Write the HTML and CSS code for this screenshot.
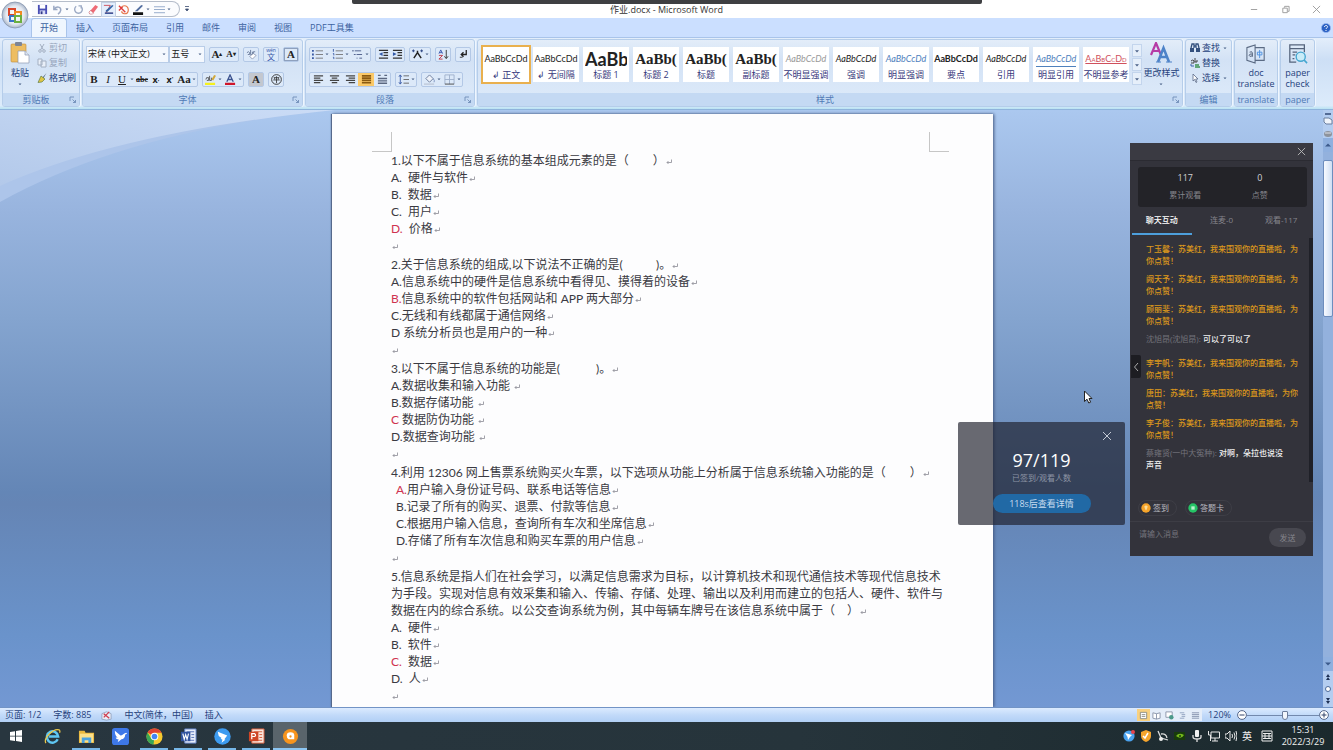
FILE: index.html
```html
<!DOCTYPE html>
<html lang="zh-CN">
<head>
<meta charset="utf-8">
<title>作业.docx - Microsoft Word</title>
<link rel="stylesheet" href="styles.css">
</head>
<body>
<svg class="defs" aria-hidden="true">
  <symbol id="ret" viewBox="0 0 6 6"><path d="M5.500 .500v3H1M2.500 2L1 3.500 2.500 5" fill="none" stroke="#8a8a94" stroke-width=".8"/></symbol>
  <symbol id="caret" viewBox="0 0 6 6"><path d="M1.500 2.500h3L3 4.200z" fill="#4a6187"/></symbol>
  <symbol id="launch" viewBox="0 0 8 8"><path d="M1 5V1h4M3.500 3.500L6.500 6.500M6.500 4v2.500H4" fill="none" stroke="#6f8db8" stroke-width=".9"/></symbol>
  <symbol id="close" viewBox="0 0 10 10"><path d="M1 1l8 8M9 1L1 9" fill="none" stroke="currentColor"/></symbol>
</svg>
<div class="app">
  <header class="titlebar">
    <div class="notch"></div>
    <div class="qat">
      <button aria-label="保存"><svg viewBox="0 0 12 12"><path d="M1 1h10v10H1z" fill="#4a4fb5"/><path d="M3 1h6v4H3z" fill="#fff"/><path d="M3 7h6v4H3z" fill="#d6daf5"/><path d="M4 8h2v3H4z" fill="#333a8a"/></svg></button>
      <button aria-label="撤销"><svg viewBox="0 0 12 12"><path d="M2 2v4h4M2.500 5.500C5 2 10 3 9.500 7 9.300 9 8 10 6.500 11" fill="none" stroke="#9ba9c4" stroke-width="1.600"/></svg></button>
      <svg class="car"><use href="#caret"/></svg>
      <button aria-label="恢复"><svg viewBox="0 0 12 12"><path d="M3.500 2.500a4.200 4.200 0 1 0 5 0M9 5V2H6" fill="none" stroke="#9ba9c4" stroke-width="1.500"/></svg></button>
      <button aria-label="橡皮擦"><svg viewBox="0 0 12 12"><path d="M1 9l7-8 3 2-6 8H2z" fill="#ee6b76"/><path d="M1 9l2-2 3 3-1 1H2z" fill="#fff" stroke="#b94953" stroke-width=".5"/></svg></button>
      <button class="pressed" aria-label="墨迹笔"><svg viewBox="0 0 12 12"><path d="M1 1.500h7L3 10h8" fill="none" stroke="#cc4b59"/><path d="M3 7l7-6 1.500 1L5 8.500H3z" fill="#3565a6"/><path d="M2 10h9" stroke="#274d99" stroke-width="1.500"/></svg></button>
      <button aria-label="停止墨迹"><svg viewBox="0 0 12 12"><path d="M1 2l7 7M1 7l4-4" stroke="#df3d3d" stroke-width="1.500"/><path d="M4 3c5-3 8 1 7 5-1 4-7 3-7 0" fill="none" stroke="#e6774a" stroke-width="1.300"/></svg></button>
      <button aria-label="笔颜色"><svg viewBox="0 0 12 12"><path d="M2 8l7-7 2 1-6 6z" fill="#546fa1"/><path d="M0 9h11v3H0z" fill="#111"/></svg></button>
      <svg class="car"><use href="#caret"/></svg>
      <button aria-label="粗细"><svg viewBox="0 0 12 12"><path d="M0 3h12M0 6h12M0 9.500h12" stroke="#8fa6c8"/></svg></button>
      <svg class="car"><use href="#caret"/></svg>
    </div>
    <svg class="qat-more" viewBox="0 0 6 8"><path d="M1 1.500h4M1.500 4h3L3 6z" fill="#3b4d70" stroke="#3b4d70" stroke-width=".8"/></svg>
    <h1>作业.docx - Microsoft Word</h1>
    <div class="winbtns">
      <button aria-label="最小化"><svg viewBox="0 0 10 10"><path d="M1 5h7" stroke="#999"/></svg></button>
      <button aria-label="还原"><svg viewBox="0 0 10 10"><path d="M2 3.500h5v5H2zM4 3V1.500h5V7H7.500" fill="none" stroke="#999"/></svg></button>
      <button aria-label="关闭"><svg><use href="#close"/></svg></button>
    </div>
    <button class="orb" aria-label="Office 按钮"><svg viewBox="0 0 28 28"><defs><radialGradient id="og"><stop offset="0" stop-color="#fff"/><stop offset=".7" stop-color="#e3e8f0"/><stop offset="1" stop-color="#a9b6ca"/></radialGradient></defs><circle cx="14" cy="14" r="13" fill="url(#og)" stroke="#8796ad" stroke-width=".8"/><g fill="none" stroke-width="2"><path d="M8 8h6v6H8z" stroke="#d9472b"/><path d="M14 11h6v4h-6z" stroke="#f08a24"/><path d="M9 15h5v5H9z" stroke="#3b74c9"/><path d="M14 15h6v6h-6z" stroke="#6bb040"/></g></svg></button>
  </header>
  <nav class="tabs">
    <button class="on">开始</button><button>插入</button><button>页面布局</button><button>引用</button><button>邮件</button><button>审阅</button><button>视图</button><button>PDF工具集</button>
    <button class="help" aria-label="帮助"><svg viewBox="0 0 10 10"><circle cx="5" cy="5" r="4.600" fill="#2d62c4" stroke="#9cbaf0" stroke-width=".7"/><path d="M3.500 4c0-2 3-2 3-.2C6.500 5 5 5 5 6M5 7v1" fill="none" stroke="#fff"/></svg></button>
  </nav>

  <section class="ribbon">
    <div class="group g-clip">
      <div class="body">
        <button class="big"><svg class="i-paste" viewBox="0 0 20 22"><rect x="1" y="2" width="15" height="18" rx="1" fill="#edbd62" stroke="#bf8b38" stroke-width=".6"/><rect x="5" y="0" width="7" height="4" rx="1" fill="#7d8596"/><path d="M8 9h7l4 4v8H8z" fill="#fff" stroke="#8d9ab3" stroke-width=".7"/><path d="M15 9v4h4" fill="#dde5f2" stroke="#8d9ab3" stroke-width=".7"/></svg><span>粘贴</span><svg class="car"><use href="#caret"/></svg></button>
        <div class="list">
          <button class="off"><svg viewBox="0 0 10 10"><path d="M3 1l3.500 6M7 1L3.500 7" stroke="#a4b0c2"/><circle cx="3" cy="8" r="1.300" fill="none" stroke="#a4b0c2"/><circle cx="7" cy="8" r="1.300" fill="none" stroke="#a4b0c2"/></svg>剪切</button>
          <button class="off"><svg viewBox="0 0 10 10"><path d="M1 1h4v6H1zM4 3h5v6H4z" fill="#e9eff8" stroke="#a4b0c2"/></svg>复制</button>
          <button><svg viewBox="0 0 10 10"><path d="M9.500 0L5 5l1 1z" fill="#5d6d8a"/><path d="M4 3l4 3-3 3-4 .500z" fill="#dfc646" stroke="#4e7038" stroke-width=".6"/></svg>格式刷</button>
        </div>
      </div>
      <div class="cap"><span>剪贴板</span><svg><use href="#launch"/></svg></div>
    </div>

    <div class="group g-font">
      <div class="body col">
        <div class="row">
          <div class="combo wide"><select aria-label="字体"><option>宋体 (中文正文)</option></select><svg class="car"><use href="#caret"/></svg></div>
          <div class="combo"><select aria-label="字号"><option>五号</option></select><svg class="car"><use href="#caret"/></svg></div>
          <div class="set gap"><button class="serif b">A<sup>▴</sup></button><button class="serif s b">A<sup>▾</sup></button></div>
          <div class="set gap"><button aria-label="清除格式"><svg viewBox="0 0 12 12"><path d="M1 4q2-2 3 0v2H2M5 1v5h2V3M10 3H8v3" fill="none" stroke="#68799a"/><path d="M4 8l4-3 3 2-4 4z" fill="#fff" stroke="#7d89a6" stroke-width=".8"/></svg></button></div>
          <div class="set gap"><button class="pin" aria-label="拼音指南"><small>wén</small>文</button></div>
          <div class="set gap"><button class="serif b boxed">A</button></div>
        </div>
        <div class="row">
          <div class="set"><button class="serif b">B</button><button class="serif it">I</button><button class="serif un">U</button><svg class="car"><use href="#caret"/></svg><button class="serif st b">abc</button><button class="b">x<sub>,</sub></button><button class="b">x<sup>'</sup></button><button class="serif b">Aa</button><svg class="car"><use href="#caret"/></svg></div>
          <div class="set gap"><button aria-label="突出显示"><svg viewBox="0 0 12 12"><path d="M1 6q0-3 3-2v3H2M5 2v5h2V4" fill="none" stroke="#555"/><path d="M7 6l3-5 2 1-3 5z" fill="#d1a83b"/><path d="M0 9.500h11v2.500H0z" fill="#f5f01e"/></svg></button><svg class="car"><use href="#caret"/></svg><button aria-label="字体颜色"><svg viewBox="0 0 12 12"><path d="M2 8.500L5.500 1 9 8.500M3 6h5" fill="none" stroke="#3c5390" stroke-width="1.400"/><path d="M0 9.500h11v2.500H0z" fill="#d0162b"/></svg></button><svg class="car"><use href="#caret"/></svg></div>
          <div class="set gap"><button class="serif b grey">A</button></div>
          <div class="set gap"><button aria-label="带圈字符"><svg viewBox="0 0 12 12"><circle cx="6" cy="6" r="5.300" fill="none" stroke="#333"/><path d="M3 4h6M2.500 6.500h7M6 2.500v7.500M4 6v-2M8 6v-2" stroke="#333" stroke-width=".9"/></svg></button></div>
        </div>
      </div>
      <div class="cap"><span>字体</span><svg><use href="#launch"/></svg></div>
    </div>

    <div class="group g-para">
      <div class="body col">
        <div class="row">
          <div class="set"><button aria-label="项目符号"><svg viewBox="0 0 12 12"><path d="M4 2h8M4 6h8M4 10h8" stroke="#777"/><path d="M0 1h2v2H0zM0 5h2v2H0zM0 9h2v2H0z" fill="#3a5ba5"/></svg></button><svg class="car"><use href="#caret"/></svg><button aria-label="编号"><svg viewBox="0 0 12 12"><path d="M4 2h8M4 6h8M4 10h8" stroke="#777"/><path d="M1.500 0v3M1 5h1v2M1 9h1v2" stroke="#3a5ba5" fill="none"/></svg></button><svg class="car"><use href="#caret"/></svg><button aria-label="多级列表"><svg viewBox="0 0 12 12"><path d="M0 2h2M3 2h7M2 6h2M5 6h6M5 10h1M8 10h3" stroke="#4a5b88"/></svg></button><svg class="car"><use href="#caret"/></svg></div>
          <div class="set gap"><button aria-label="减少缩进"><svg viewBox="0 0 12 12"><path d="M1 1.500h10M6 4h5M6 7h5M1 10h10" stroke="#333" stroke-width="1.400"/><path d="M5 3.500v4L1 5.500z" fill="#3159a8"/></svg></button><button aria-label="增加缩进"><svg viewBox="0 0 12 12"><path d="M1 1.500h10M6 4h5M6 7h5M1 10h10" stroke="#333" stroke-width="1.400"/><path d="M1 3.500v4l4-2z" fill="#3159a8"/></svg></button></div>
          <div class="set gap"><button aria-label="中文版式"><svg viewBox="0 0 12 12"><path d="M2 10l4-6 4 6M6 4V2" fill="none" stroke="#222" stroke-width="1.600"/><path d="M0 2h3M9 2h3M1.500 .500v3M10.500 .500v3" stroke="#26407e"/></svg></button><svg class="car"><use href="#caret"/></svg></div>
          <div class="set gap"><button aria-label="排序"><svg viewBox="0 0 12 12"><path d="M1 5l2-4 2 4M1.500 4h3" fill="none" stroke="#3b59b0"/><path d="M1 7h4l-4 4h4" fill="none" stroke="#c03747"/><path d="M9 1v9M7 8l2 2.500L11 8" fill="none" stroke="#333"/></svg></button></div>
          <div class="set gap"><button aria-label="显示编辑标记"><svg viewBox="0 0 12 12"><path d="M9 1v5H4M6 3.500L3.500 6 6 8.500" fill="none" stroke="#222" stroke-width="1.400"/><path d="M2 9h3" stroke="#333"/></svg></button></div>
        </div>
        <div class="row">
          <div class="set wide"><button aria-label="左对齐"><svg viewBox="0 0 12 12"><path d="M1 2h10M1 4.500h7M1 7h10M1 9.500h7" stroke="#444" stroke-width="1.400"/></svg></button><button aria-label="居中"><svg viewBox="0 0 12 12"><path d="M1 2h10M3 4.500h6M1 7h10M3 9.500h6" stroke="#444" stroke-width="1.400"/></svg></button><button aria-label="右对齐"><svg viewBox="0 0 12 12"><path d="M1 2h10M4 4.500h7M1 7h10M4 9.500h7" stroke="#444" stroke-width="1.400"/></svg></button><button class="hot" aria-label="两端对齐"><svg viewBox="0 0 12 12"><path d="M1 2h10M1 4.500h10M1 7h10M1 9.500h10" stroke="#8a5a10" stroke-width="1.800"/></svg></button><button aria-label="分散对齐"><svg viewBox="0 0 12 12"><path d="M1 1.500h3M8 1.500h3M1 5h10M1 7.500h10M1 10h10" stroke="#5a6780" stroke-width="1.600"/></svg></button></div>
          <div class="set gap"><button aria-label="行距"><svg viewBox="0 0 12 12"><path d="M6 2h6M6 6h6M6 10h6" stroke="#666"/><path d="M2.500 1v10M1 3l1.500-2L4 3M1 9l1.500 2L4 9" fill="none" stroke="#3b5ca8"/></svg></button><svg class="car"><use href="#caret"/></svg></div>
          <div class="set gap"><button aria-label="底纹"><svg viewBox="0 0 12 12"><path d="M2 5l4-4 4 4-4 4z" fill="#eef2f9" stroke="#69799a"/><path d="M10 5q2 2 1 4" stroke="#7a91bd" fill="none"/><path d="M0 10h11v2H0z" fill="#c5cfdf"/></svg></button><svg class="car"><use href="#caret"/></svg><button aria-label="边框"><svg viewBox="0 0 12 12"><path d="M1 1h10v10M1 1v10M6 1v10M1 6h10" fill="none" stroke="#9fb0cc"/><path d="M1 11h10" stroke="#444"/></svg></button><svg class="car"><use href="#caret"/></svg></div>
        </div>
      </div>
      <div class="cap"><span>段落</span><svg><use href="#launch"/></svg></div>
    </div>

    <div class="group g-style">
      <div class="body">
        <div class="gallery">
          <button class="sel"><b>AaBbCcDd</b><span>↲ 正文</span></button>
          <button><b>AaBbCcDd</b><span>↲ 无间隔</span></button>
          <button><b class="h1">AaBb</b><span>标题 1</span></button>
          <button><b class="h2">AaBb(</b><span>标题 2</span></button>
          <button><b class="h2">AaBb(</b><span>标题</span></button>
          <button><b class="h2">AaBb(</b><span>副标题</span></button>
          <button><b class="i lt">AaBbCcDd</b><span>不明显强调</span></button>
          <button><b class="i">AaBbCcDd</b><span>强调</span></button>
          <button><b class="i bl">AaBbCcDd</b><span>明显强调</span></button>
          <button><b class="bd">AaBbCcDd</b><span>要点</span></button>
          <button><b class="i">AaBbCcDd</b><span>引用</span></button>
          <button><b class="i bl ul">AaBbCcDd</b><span>明显引用</span></button>
          <button><b class="sc">AaBbCcDd</b><span>不明显参考</span></button>
        </div>
        <div class="updown"><button aria-label="上"><svg><use href="#caret"/></svg></button><button aria-label="下"><svg><use href="#caret"/></svg></button><button aria-label="更多"><svg><use href="#caret"/></svg></button></div>
        <button class="big chg"><svg class="i-aa" viewBox="0 0 22 22"><path d="M1 13L6 1l5 12M3 9h6" fill="none" stroke="#b63ba6" stroke-width="2.200"/><path d="M8 20L13.500 6 19 20M10 15h7" fill="none" stroke="#4e83c8" stroke-width="2.600"/><path d="M6 20h5M16 20h6" stroke="#4e83c8"/></svg><span>更改样式</span><svg class="car"><use href="#caret"/></svg></button>
      </div>
      <div class="cap"><span>样式</span><svg><use href="#launch"/></svg></div>
    </div>

    <div class="group g-edit">
      <div class="body">
        <div class="list">
          <button><svg viewBox="0 0 10 10"><path d="M1 5l1-4h2v4M6 5V1h2l1 4M4 3h2" fill="none" stroke="#33507e" stroke-width="1.300"/><path d="M0 5h4v4H0zM6 5h4v4H6z" fill="#33507e"/></svg>查找<svg class="car"><use href="#caret"/></svg></button>
          <button><svg viewBox="0 0 10 10"><path d="M1 3q2-2 3 0v2H1M5 0v4h2V2" fill="none" stroke="#444"/><path d="M5 7h4M5 9h5" stroke="#3c9250" stroke-width="1.300"/><path d="M1 6v2h3" stroke="#3d62ae" fill="none"/></svg>替换</button>
          <button><svg viewBox="0 0 10 10"><path d="M3 1v7l1.600-1.500L6 9.500l1-.500-1.300-3H8z" fill="#fff" stroke="#5a6a88" stroke-width=".8"/></svg>选择<svg class="car"><use href="#caret"/></svg></button>
        </div>
      </div>
      <div class="cap"><span>编辑</span></div>
    </div>
    <div class="group g-doc">
      <div class="body"><button class="big en"><svg class="i-lg" viewBox="0 0 22 22"><path d="M1 4l9-3v20l-9-3zM10 4h10v14H10" fill="none" stroke="#5b6b84" stroke-width="1.200"/><path d="M4 9q3-1.500 3 1v4M7 11q-3.500-.500-3.500 1.500T7 13" fill="none" stroke="#4b5a74"/><path d="M12.500 9h5v3h-5zM15 6.500v9" fill="none" stroke="#4a8fe0"/></svg><span>doc</span><span>translate</span></button></div>
      <div class="cap"><span>translate</span></div>
    </div>
    <div class="group g-paper">
      <div class="body"><button class="big en"><svg class="i-lg" viewBox="0 0 22 22"><path d="M9 20H2V1h16v8M2 5h16M5 9h5M5 12h3M5 16h2" fill="none" stroke="#55647c" stroke-width="1.400"/><circle cx="14" cy="14" r="5" fill="#c9ecf8" stroke="#45a7d0" stroke-width="1.500"/><path d="M17.500 17.500L21 21" stroke="#45a7d0" stroke-width="1.700"/></svg><span>paper</span><span>check</span></button></div>
      <div class="cap"><span>paper</span></div>
    </div>
  </section>

  <main class="desk">
    <svg class="swoosh" viewBox="0 0 335 100" aria-hidden="true"><defs><linearGradient id="sw" x1="0" x2="1" y1="1" y2="0"><stop offset="0" stop-color="#b3c9ea"/><stop offset="1" stop-color="#cbdcf6"/></linearGradient></defs><path d="M0 0h335Q130 20 0 92z" fill="#adc5ea"/><path d="M0 0h335Q120 22 0 76z" fill="url(#sw)"/></svg>
    <div class="canvas">
      <article class="page">
        <div class="corners"><i></i><i></i></div>
        <div class="text">
          <p>1.以下不属于信息系统的基本组成元素的是（　　）<svg><use href="#ret"/></svg></p>
          <p>A.  硬件与软件<svg><use href="#ret"/></svg></p>
          <p>B.  数据<svg><use href="#ret"/></svg></p>
          <p>C.  用户<svg><use href="#ret"/></svg></p>
          <p><em>D.</em>  价格<svg><use href="#ret"/></svg></p>
          <p class="blank"><svg><use href="#ret"/></svg></p>
          <p>2.关于信息系统的组成,以下说法不正确的是(　　   )。<svg><use href="#ret"/></svg></p>
          <p>A.信息系统中的硬件是信息系统中看得见、摸得着的设备<svg><use href="#ret"/></svg></p>
          <p><em>B.</em>信息系统中的软件包括网站和 APP 两大部分<svg><use href="#ret"/></svg></p>
          <p>C.无线和有线都属于通信网络<svg><use href="#ret"/></svg></p>
          <p>D 系统分析员也是用户的一种<svg><use href="#ret"/></svg></p>
          <p class="blank"><svg><use href="#ret"/></svg></p>
          <p>3.以下不属于信息系统的功能是(　　　)。<svg><use href="#ret"/></svg></p>
          <p>A.数据收集和输入功能 <svg><use href="#ret"/></svg></p>
          <p>B.数据存储功能 <svg><use href="#ret"/></svg></p>
          <p><em>C</em> 数据防伪功能 <svg><use href="#ret"/></svg></p>
          <p>D.数据查询功能 <svg><use href="#ret"/></svg></p>
          <p class="blank"><svg><use href="#ret"/></svg></p>
          <p>4.利用 12306 网上售票系统购买火车票，以下选项从功能上分析属于信息系统输入功能的是（　　）<svg><use href="#ret"/></svg></p>
          <p class="in"><em>A.</em>用户输入身份证号码、联系电话等信息<svg><use href="#ret"/></svg></p>
          <p class="in">B.记录了所有的购买、退票、付款等信息<svg><use href="#ret"/></svg></p>
          <p class="in">C.根据用户输入信息，查询所有车次和坐席信息<svg><use href="#ret"/></svg></p>
          <p class="in">D.存储了所有车次信息和购买车票的用户信息<svg><use href="#ret"/></svg></p>
          <p class="blank"><svg><use href="#ret"/></svg></p>
          <p>5.信息系统是指人们在社会学习，以满足信息需求为目标，以计算机技术和现代通信技术等现代信息技术<br>为手段。实现对信息有效采集和输入、传输、存储、处理、输出以及利用而建立的包括人、硬件、软件与<br>数据在内的综合系统。以公交查询系统为例，其中每辆车牌号在该信息系统中属于（　）<svg><use href="#ret"/></svg></p>
          <p>A.  硬件<svg><use href="#ret"/></svg></p>
          <p>B.  软件<svg><use href="#ret"/></svg></p>
          <p><em>C.</em>  数据<svg><use href="#ret"/></svg></p>
          <p>D.  人<svg><use href="#ret"/></svg></p>
          <p class="blank"><svg><use href="#ret"/></svg></p>
        </div>
      </article>
    </div>
    <div class="vscroll">
      <div class="top"><svg viewBox="0 0 10 28"><path d="M2 4h6" stroke="#344b77" stroke-width="1.500"/><path d="M1 8h5l3 2v4H3l-2-2z" fill="#eff4fb" stroke="#6b7e9e"/><ellipse cx="5" cy="24" rx="4" ry="3" fill="#8d939d"/><path d="M2 23h6" stroke="#dfe3ea"/></svg></div>
      <button aria-label="向上滚动"><svg viewBox="0 0 8 8"><path d="M1 5.500h6L4 2.500z" fill="#3c5a8c"/></svg></button>
      <div class="track"><div class="thumb"></div></div>
      <button aria-label="向下滚动"><svg viewBox="0 0 8 8"><path d="M1 2.500h6L4 5.500z" fill="#3c5a8c"/></svg></button>
      <div class="bot"><svg viewBox="0 0 10 36"><path d="M3 6h4L5 3zM3 9h4L5 6zM3 27h4l-2 3zM3 30h4l-2 3z" fill="#1f3257"/><circle cx="5" cy="18" r="2.500" fill="#fff" stroke="#4c6a9a"/></svg></div>
    </div>
  </main>

  <footer class="status">
    <span>页面: 1/2</span><span>字数: 885</span>
    <span class="ic"><svg viewBox="0 0 12 12"><path d="M1 4l5-2 5 2v6l-5 1-5-1z" fill="#e8edf7" stroke="#8b98b5" stroke-width=".8"/><path d="M3 8l6-6M3 4l6 5" stroke="#d03c4c" stroke-width="1.400"/></svg></span>
    <span class="lang">中文(简体，中国)</span><span>插入</span>
    <div class="views">
      <button class="on" aria-label="页面视图"><svg viewBox="0 0 10 10"><path d="M1.500 1.500h7v7h-7zM3 4h4M3 6h4" fill="#fff" stroke="#8a8a80"/></svg></button><button aria-label="阅读版式"><svg viewBox="0 0 10 10"><path d="M1 2l4 1 4-1v6L5 9 1 8zM5 3v6" fill="#fff" stroke="#8893a8"/></svg></button><button aria-label="Web 版式"><svg viewBox="0 0 10 10"><path d="M1 1h7v6H1z" fill="#fff" stroke="#8893a8"/><circle cx="7" cy="7" r="2.500" fill="#4c9a8a"/></svg></button><button aria-label="大纲"><svg viewBox="0 0 10 10"><path d="M2 2h5M4 4h4M4 6h4M2 8h5" stroke="#8fa0be"/></svg></button><button aria-label="普通"><svg viewBox="0 0 10 10"><path d="M1 2h8M1 4h8M1 6h8M1 8h8" stroke="#8290ab"/></svg></button>
    </div>
    <label for="zoom">120%</label>
    <button class="zb" aria-label="缩小"><svg viewBox="0 0 10 10"><circle cx="5" cy="5" r="4.400" fill="#fff" stroke="#56688b"/><path d="M2.500 5h5" stroke="#33456b"/></svg></button>
    <input id="zoom" type="range" min="0" max="100" value="53">
    <button class="zb" aria-label="放大"><svg viewBox="0 0 10 10"><circle cx="5" cy="5" r="4.400" fill="#fff" stroke="#56688b"/><path d="M2.500 5h5M5 2.500v5" stroke="#33456b"/></svg></button>
  </footer>

  <div class="taskbar">
    <button class="start" aria-label="开始"><svg viewBox="0 0 12 12"><path d="M0 2l5-.800v4.500H0zM6 1l6-1v5.700H6zM0 6.500h5V11l-5-.800zM6 6.500h6V12l-6-1z" fill="#fff"/></svg></button>
    <button aria-label="Internet Explorer"><svg viewBox="0 0 18 18"><path d="M14.500 12A6 6 0 1 1 15 9H5" fill="none" stroke="#5fc7f3" stroke-width="2.600"/><path d="M2 16C-1 11 10 0 16 2c1 .400 1 2 .500 3" fill="none" stroke="#ecc94b" stroke-width="1.300"/></svg></button>
    <button class="run" aria-label="文件资源管理器"><svg viewBox="0 0 18 18"><path d="M1 3h6l1 2h9v11H1z" fill="#e9b93f"/><path d="M2 6h14v9H2z" fill="#fbe08a"/><path d="M4 10h10v6h-3v-3H7v3H4z" fill="#4ba3e0"/></svg></button>
    <button aria-label="迅雷"><svg viewBox="0 0 18 18"><rect width="18" height="18" rx="3" fill="#3e78e8"/><path d="M3 3l6 5c2 0 3-2 6-3l1 1-2 1c0 3-2 5-4 5l-4 3 1-3c-2 0-3-1-3-2h2C4 9 3 7 3 3z" fill="#fff"/></svg></button>
    <button class="run" aria-label="Chrome"><svg viewBox="0 0 18 18"><circle cx="9" cy="9" r="8.500" fill="#f6c92f"/><path d="M9 9L1.600 4.800A8.500 8.500 0 0 1 16.600 5H9z" fill="#e04434"/><path d="M9 9l-1 8.500A8.500 8.500 0 0 1 1.600 4.800L5.500 11z" fill="#3aa655"/><circle cx="9" cy="9" r="4" fill="#fff"/><circle cx="9" cy="9" r="3" fill="#4285f4"/></svg></button>
    <button class="run" aria-label="Word"><svg viewBox="0 0 18 18"><path d="M5 1h12v15H5z" fill="#e8eefb" stroke="#607fc3"/><path d="M7 4h8M12 7h3M12 10h3M7 13h8" stroke="#5372b8"/><rect x="1" y="4" width="10" height="10" fill="#31539f"/><path d="M3 6l1.500 6L6 7l1.500 5L9 6" fill="none" stroke="#fff" stroke-width="1.200"/></svg></button>
    <button class="run" aria-label="钉钉"><svg viewBox="0 0 18 18"><circle cx="9" cy="9" r="8.700" fill="#3d9bf0"/><path d="M4 4l10 4-3 4 1 .500-4 3 1-3-2-1 1-1-3-2z" fill="#fff"/></svg></button>
    <button class="run" aria-label="PowerPoint"><svg viewBox="0 0 18 18"><path d="M4 1h13v15H4z" fill="#fbe7df" stroke="#d35a38"/><path d="M6 4h9M12 7h3M12 10h3M6 13h9" stroke="#d35a38"/><rect x="1" y="4" width="10" height="10" fill="#cf4526"/><path d="M4 12V6h3q2 2 0 3H4" fill="none" stroke="#fff" stroke-width="1.300"/></svg></button>
    <button class="run cur" aria-label="直播"><svg viewBox="0 0 18 18"><circle cx="9" cy="9" r="8" fill="#f7941d"/><path d="M5 8a4 3.500 0 0 1 8 0v4H7q-2-1-2-4z" fill="#fff"/><circle cx="9" cy="9" r="1.200" fill="#f7941d"/></svg></button>
    <div class="tray">
      <svg viewBox="0 0 12 12"><circle cx="6" cy="6" r="5.600" fill="#4aa2ef"/><path d="M2 3l7 2-2 2-2 3-.500-3z" fill="#fff"/><circle cx="10" cy="2" r="2" fill="#e6434d"/></svg>
      <svg viewBox="0 0 12 12"><path d="M6 0l5 2v4q0 4-5 6-5-2-5-6V2z" fill="#f6a52d"/><path d="M3 6l2 2 3-5" fill="none" stroke="#fff" stroke-width="1.500"/></svg>
      <svg viewBox="0 0 12 12"><path d="M1 1l3 7 7 2M4 4q5-1 6 4" fill="none" stroke="#ddd" stroke-width="1.300"/><circle cx="4" cy="9" r="2" fill="#eee"/></svg>
      <svg viewBox="0 0 12 12"><path d="M0 2h11v8H0z" fill="#183b0c"/><path d="M2 6q3-4 8-1-3 5-8 1z" fill="#75b91c"/><circle cx="6" cy="6" r="1" fill="#183b0c"/></svg>
      <svg viewBox="0 0 12 12"><rect x="4" y="0" width="4" height="7" rx="1" fill="#f2f2f2"/><path d="M2 5v2q0 2 4 2t4-2V5M6 9v3" fill="none" stroke="#ddd" stroke-width="1.300"/></svg>
      <svg viewBox="0 0 12 12"><path d="M3 2h8.500v6H3zM7 8v3M4 11h6M.500 1v4h2v6" fill="none" stroke="#e8e8e8"/></svg>
      <svg viewBox="0 0 12 12"><path d="M0 4h2l3-3v10L2 8H0zM7 4q1 2 0 4M9 2.500q2 3.500 0 7M11 1q2 5 0 10" fill="none" stroke="#e8e8e8"/></svg>
      <span>英</span>
      <svg class="ime" viewBox="0 0 12 12"><path d="M1 1h10v10H1zM1 6h10M4 3v6M8 3v6M2 3.500h8M2 8.500h8" fill="none" stroke="#eee"/></svg>
    </div>
    <div class="clock"><span>15:31</span><span>2022/3/29</span></div>
  </div>

  <svg class="cursor" viewBox="0 0 10 14"><path d="M1.500 1v10.500L4 9.200l1.800 3.800 1.800-.800L6 8.500h3z" fill="#fff" stroke="#222"/></svg>

  <section class="popup">
    <button class="x" aria-label="关闭"><svg><use href="#close"/></svg></button>
    <strong>97/119</strong>
    <span>已签到/观看人数</span>
    <button class="pill">118s后查看详情</button>
  </section>

  <aside class="chat">
    <div class="head"><button aria-label="关闭"><svg><use href="#close"/></svg></button></div>
    <div class="stats"><div><b>117</b><span>累计观看</span></div><div><b>0</b><span>点赞</span></div></div>
    <div class="ctabs"><button class="on">聊天互动</button><button>连麦-0</button><button>观看-117</button></div>
    <div class="msgs">
      <p>丁玉馨：苏美红，我来围观你的直播啦，为你点赞！</p>
      <p>阙天予：苏美红，我来围观你的直播啦，为你点赞！</p>
      <p>顾丽斐：苏美红，我来围观你的直播啦，为你点赞！</p>
      <p class="say"><span>沈旭昂(沈旭昂): </span>可以了可以了</p>
      <p>李宇帆：苏美红，我来围观你的直播啦，为你点赞！</p>
      <p>唐田：苏美红，我来围观你的直播啦，为你点赞！</p>
      <p>李子俊：苏美红，我来围观你的直播啦，为你点赞！</p>
      <p class="say"><span>蔡雍贤(一中大冤种): </span>对啊，朵拉也说没<br>声音</p>
      <div class="bar"></div>
    </div>
    <div class="acts">
      <button><svg viewBox="0 0 12 12"><circle cx="6" cy="6" r="5.600" fill="#f6a42a"/><path d="M4 4q2-2 4 0 0 2-2 5-2-3-2-5z" fill="#fbdc9a"/></svg>签到</button>
      <button><svg viewBox="0 0 12 12"><circle cx="6" cy="6" r="5.600" fill="#25c466"/><path d="M4 4h4v4H4z" fill="#b9f2cf"/></svg>答题卡</button>
    </div>
    <div class="send"><input type="text" aria-label="消息" placeholder="请输入消息"><button>发送</button></div>
    <button class="fold" aria-label="收起"><svg viewBox="0 0 6 10"><path d="M5 1L1.500 5 5 9" fill="none" stroke="#aaa"/></svg></button>
  </aside>
</div>
</body>
</html>
```
FILE: styles.css
```css
* { box-sizing: border-box; }
body { margin: 0; font: 9px/12px "Open Sans", "Noto Sans CJK SC", sans-serif; color: #26427c; }
button, select, input { font: inherit; color: inherit; background: none; border: 0; padding: 0; margin: 0; }
h1, p { margin: 0; font-weight: normal; }
svg { display: block; flex: none; }
.defs { position: absolute; width: 0; height: 0; }
.app { position: relative; display: flex; flex-direction: column; height: 100vh; overflow: hidden; background: #fff; }
.car { width: 6px; height: 6px; }

/* title bar */
.titlebar { position: relative; flex: none; display: flex; align-items: center; height: 18px; }
.notch { position: absolute; top: 0; left: 352px; right: 351px; height: 4px; background: #3e3f42; border-radius: 0 0 2px 2px; }
.qat { display: flex; align-items: center; gap: 2px; height: 16px; width: 148px; margin-left: 32px; padding-left: 4px; border: 1px solid #b5bdca; border-left: 0; border-radius: 0 8px 8px 0; background: #fbfcfe; }
.qat button { width: 13px; height: 13px; padding: 1px; }
.qat button.pressed { background: #e4eefc; box-shadow: 0 0 0 1px #c3d0e4; }
.qat .car { margin: 0 0 0 -2px; }
.qat button svg { width: 11px; height: 11px; }
.qat-more { width: 6px; height: 8px; margin-left: 4px; }
.titlebar h1 { position: absolute; left: 0; right: 0; top: 4px; text-align: center; font-size: 9px; line-height: 12px; color: #333; pointer-events: none; }
.winbtns { display: flex; gap: 22px; margin-left: auto; padding-right: 12px; color: #999; }
.winbtns svg { width: 9px; height: 9px; }
.orb { position: absolute; left: 1px; top: 1px; width: 28px; height: 28px; z-index: 2; }
.orb svg { width: 28px; height: 28px; }

/* tabs */
.tabs { flex: none; display: flex; height: 19px; padding-left: 31px; background: #cbdfff; }
.tabs button { padding: 0 9px; color: #3c62a0; }
.tabs .on { background: #eff6fe; border: 1px solid #a9c4ea; border-bottom: 0; border-radius: 3px 3px 0 0; padding: 0 8px; }
.tabs .help { margin-left: auto; padding: 0 2px; }
.help svg { width: 10px; height: 10px; }

/* ribbon */
.ribbon { flex: none; display: flex; gap: 2px; height: 73px; padding: 1px 18px 2px 2px; background: linear-gradient(#e3eefb, #cddff5 30%, #dcebfb 95%, #b9e2f2); border-top: 1px solid #a9c4ea; border-bottom: 1px solid #8fb4dc; }
.group { display: flex; flex-direction: column; border: 1px solid #b5cdea; border-radius: 3px; background: linear-gradient(#e3edf9, #d3e2f5 30%, #deebfa); overflow: hidden; box-shadow: 1px 0 0 #eff6fe; }
.body { flex: 1; display: flex; min-height: 0; }
.col { flex-direction: column; justify-content: space-between; padding: 5px 3px; }
.row { display: flex; align-items: center; height: 18px; }
.cap { flex: none; display: flex; align-items: center; height: 13px; background: #c4d9f3; color: #5079b5; }
.cap span { flex: 1; text-align: center; }
.cap svg { width: 8px; height: 8px; margin-right: 2px; }
.g-clip { width: 78px; }
.g-font { width: 221px; }
.g-para { width: 170px; }
.g-style { flex: 1; min-width: 0; }
.g-edit { width: 47px; }
.g-doc { width: 44px; }
.g-paper { width: 35px; }
.big { display: flex; flex-direction: column; align-items: center; gap: 3px; padding-top: 2px; }
.g-clip .big { width: 34px; }
.i-paste { width: 20px; height: 22px; }
.i-aa { width: 22px; height: 22px; }
.i-lg { width: 22px; height: 20px; }
.big .car { margin-top: -1px; }
.en { flex: 1; gap: 0; line-height: 11px; }
.en .i-lg { margin: 2px 0 3px; }
.list { display: flex; flex-direction: column; gap: 3px; padding-top: 2px; }
.list button { display: flex; align-items: center; gap: 2px; white-space: nowrap; }
.list button > svg:first-child { width: 10px; height: 10px; }
.g-edit .list { padding-left: 4px; }
.off { color: #98a6bd; }
.combo { position: relative; display: flex; align-items: center; width: 37px; height: 17px; background: #f4f8fe; border: 1px solid #b9cde8; color: #222; }
.combo.wide { width: 86px; }
.combo select { flex: 1; min-width: 0; height: 15px; appearance: none; padding-left: 1px; }
.combo .car { position: absolute; right: 1px; pointer-events: none; }
.set { display: flex; align-items: center; height: 15px; border: 1px solid #b3c8e6; border-radius: 2px; background: #dce9f9; color: #222; }
.gap { margin-left: 4px; }
.set button { display: flex; align-items: center; justify-content: center; min-width: 14px; height: 13px; line-height: 13px; }
.set button svg { width: 11px; height: 11px; }
.set sup, .set sub { font-size: 6px; line-height: 6px; }
.serif { font-family: "Liberation Serif", serif; font-size: 11px; }
.serif.s { font-size: 9px; }
.b { font-weight: bold; }
.it { font-style: italic; }
.un { text-decoration: underline; }
.st { font-size: 8px; text-decoration: line-through; }
.boxed { box-shadow: inset 0 0 0 1px #8ea0bd; }
.grey { background: #c3c7cf; }
.pin { flex-direction: column; color: #3554a8; font-size: 8px; }
.set .pin { line-height: 7px; }
.pin small { font-size: 5px; line-height: 5px; }
.g-para .wide button { width: 16px; }
.hot { background: #fbc968; }

.g-style .body { padding: 4px 1px 0 3px; }
.gallery { display: flex; flex: none; height: 41px; }
.gallery button { display: flex; flex-direction: column; align-items: center; justify-content: space-between; width: 46px; height: 35px; margin: 3px 2px; padding: 2px 0 1px; background: #fff; overflow: hidden; color: #36387c; white-space: nowrap; }
.gallery .sel { box-shadow: 0 0 0 2px #e9b04e; }
.gallery b { font: 9px/20px Lato, sans-serif; color: #222; }
.gallery .h1 { font: bold 18px/20px Lato, sans-serif; width: 42px; overflow: hidden; }
.gallery .h2 { font: bold 15px/20px "Liberation Serif", serif; width: 42px; overflow: hidden; }
.gallery .i { font-style: italic; }
.gallery .lt { color: #999; }
.gallery .bl { color: #4f81bd; }
.gallery .bd { font-weight: bold; }
.gallery .ul { line-height: 14px; border-bottom: 1px solid #4f81bd; margin-top: 3px; }
.gallery .sc { font-variant: small-caps; color: #d0505c; text-decoration: underline; }
.updown { display: flex; flex-direction: column; gap: 1px; margin-left: 1px; }
.updown button { width: 10px; height: 13px; background: #e6effa; border: 1px solid #c3d5ed; }
.updown svg { width: 8px; height: 8px; }
.chg { margin: -4px auto 0; }

/* document area */
.desk { position: relative; flex: 1; display: flex; min-height: 0; background: linear-gradient(#abc8ef, #98b4de 17%, #84a4cf 35%, #6486b6 64%, #6585b5 66%, #6a93cb 88%, #7398d3); }
.swoosh { position: absolute; left: 0; top: 0; width: 335px; height: 100px; }
.canvas { position: relative; flex: 1; display: flex; justify-content: center; padding: 4px 0 0 2px; overflow: hidden; }
.page { width: 661px; background: #fdfdfe; box-shadow: -1px 0 1px #56698c, 1px 0 3px #42577f; }
.corners { display: flex; justify-content: space-between; height: 38px; padding: 18px 44px 0 40px; }
.corners i { width: 20px; height: 20px; border-bottom: 1px solid #c6c6c6; }
.corners i:first-child { border-right: 1px solid #c6c6c6; }
.corners i:last-child { border-left: 1px solid #c6c6c6; }
.text { padding-left: 59px; font: 12px/17px Lato, "Noto Sans CJK SC", sans-serif; color: #3a3a42; }
.text p { min-height: 17px; white-space: pre; }
.text .blank { height: 19px; padding-top: 7px; }
.text .in { padding-left: 5px; }
.text em { font-style: normal; color: #cf3350; }
.text svg { display: inline-block; width: 6px; height: 6px; margin-left: 1px; }
.text .blank svg { display: block; }

.vscroll { position: relative; flex: none; display: flex; flex-direction: column; width: 10px; background: #b4cdf0; }
.top svg { width: 10px; height: 28px; }
.vscroll button { height: 14px; background: #8fb0df; padding-left: 1px; }
.vscroll button svg { width: 8px; height: 8px; }
.track { flex: 1; padding-top: 8px; background: #93b1dd; }
.thumb { height: 157px; border: 1px solid #6d8dbd; border-radius: 2px; background: linear-gradient(90deg, #f7faff, #cfdef3); }
.bot svg { width: 10px; height: 36px; }

/* status bar */
.status { flex: none; display: flex; align-items: center; height: 15px; padding: 0 4px 0 5px; background: linear-gradient(#dcebff, #c2daf9 50%, #b1cff5); border-top: 1px solid #7294c6; }
.status span { margin-right: 12px; }
.status .ic { margin-left: -2px; }
.status .ic svg { width: 11px; height: 11px; }
.views { display: flex; margin-left: auto; height: 12px; background: #e4edf9; }
.views button { width: 13px; padding: 0 2px; }
.views svg { width: 9px; height: 9px; }
.views .on { background: #f9d180; }
.status label { margin: 0 6px; }
.zb svg { width: 10px; height: 10px; }
#zoom { appearance: none; width: 72px; height: 10px; background: linear-gradient(#7389ad, #7389ad) center / 100% 1px no-repeat; }
#zoom::-webkit-slider-thumb { appearance: none; width: 6px; height: 9px; border: 1px solid #6b7d9c; border-radius: 1px 1px 3px 3px; background: #f2f6fc; }

/* taskbar */
.taskbar { flex: none; display: flex; height: 28px; background: linear-gradient(90deg, #28363f, #26343b 60%, #1b292d); color: #f1f1f1; }
.taskbar button { display: flex; align-items: center; justify-content: center; width: 34px; }
.taskbar button svg { width: 17px; height: 17px; }
.taskbar .start { width: 35px; padding-right: 3px; }
.taskbar .start svg { width: 12px; height: 12px; }
.taskbar .run { background: linear-gradient(#77b7e8, #77b7e8) center bottom / 28px 2px no-repeat; }
.taskbar .cur { background: linear-gradient(#8cc5f2, #8cc5f2) center bottom / 34px 2px no-repeat #59646b; }
.tray { display: flex; align-items: center; gap: 5px; margin-left: auto; font-size: 10px; }
.tray svg { width: 12px; height: 12px; }
.tray .ime { margin-left: 4px; }
.clock { display: flex; flex-direction: column; justify-content: center; align-items: center; width: 60px; }

/* floating windows */
.cursor { position: absolute; left: 1083px; top: 390px; width: 10px; height: 14px; }
.popup { position: absolute; right: 208px; top: 422px; width: 167px; height: 103px; display: flex; flex-direction: column; align-items: center; padding-top: 26px; background: rgba(30, 31, 43, .67); border-radius: 2px; color: #8e95a5; }
.popup .x { position: absolute; right: 13px; top: 9px; color: #c3c9d4; }
.popup .x svg { width: 10px; height: 10px; }
.popup strong { font-size: 18px; line-height: 24px; font-weight: normal; color: #fff; }
.popup span { font-size: 8px; }
.popup .pill { width: 98px; height: 19px; margin-top: 10px; border-radius: 10px; background: #2169a5; color: #c8dcf0; }

.chat { position: absolute; right: 20px; top: 143px; width: 183px; height: 413px; display: flex; flex-direction: column; background: #33333b; color: #85858c; font-size: 8px; line-height: 12px; }
.head { display: flex; justify-content: flex-end; align-items: center; height: 18px; padding-right: 7px; background: #3a3a42; border-bottom: 1px solid #2b2b32; color: #bbb; }
.head svg { width: 9px; height: 9px; }
.stats { display: flex; margin: 6px 6px 0 8px; padding: 3px 10px 5px; border-radius: 3px; background: #232328; }
.stats div { flex: 1; display: flex; flex-direction: column; align-items: center; gap: 2px; line-height: 15px; }
.stats b { font-weight: normal; font-size: 9px; color: #d2d2d5; }
.ctabs { display: flex; height: 28px; padding: 0 2px; }
.ctabs button { flex: 1; border-bottom: 2px solid transparent; }
.ctabs .on { color: #fff; border-color: #4d9fdc; font-weight: 500; }
.msgs { position: relative; flex: 1; display: flex; flex-direction: column; gap: 6px; padding: 8px 9px 0 16px; }
.msgs p { min-height: 18px; color: #dc981c; font-weight: 500; }
.msgs .say { color: #f0f0f0; }
.msgs .say span { color: #74747b; font-weight: normal; }
.msgs .bar { position: absolute; right: 0; top: 3px; width: 4px; height: 244px; background: #1f2027; }
.acts { display: flex; gap: 8px; padding: 0 8px 5px; border-bottom: 1px solid #3d3d45; }
.acts button { display: flex; align-items: center; gap: 2px; height: 16px; padding: 0 7px 0 2px; border: 1px solid #3e3e46; border-radius: 8px; color: #bcbcc2; }
.acts svg { width: 10px; height: 10px; }
.send { display: flex; height: 34px; padding: 6px 7px 9px 9px; }
.send input { flex: 1; min-width: 0; height: 12px; }
.send input::placeholder { color: #74747b; }
.send button { width: 37px; height: 19px; border-radius: 10px; background: #484850; }
.fold { position: absolute; left: 1px; top: 212px; width: 10px; height: 23px; background: #1d1d22; border-radius: 0 2px 2px 0; padding-left: 2px; }
.fold svg { width: 6px; height: 10px; }
```
